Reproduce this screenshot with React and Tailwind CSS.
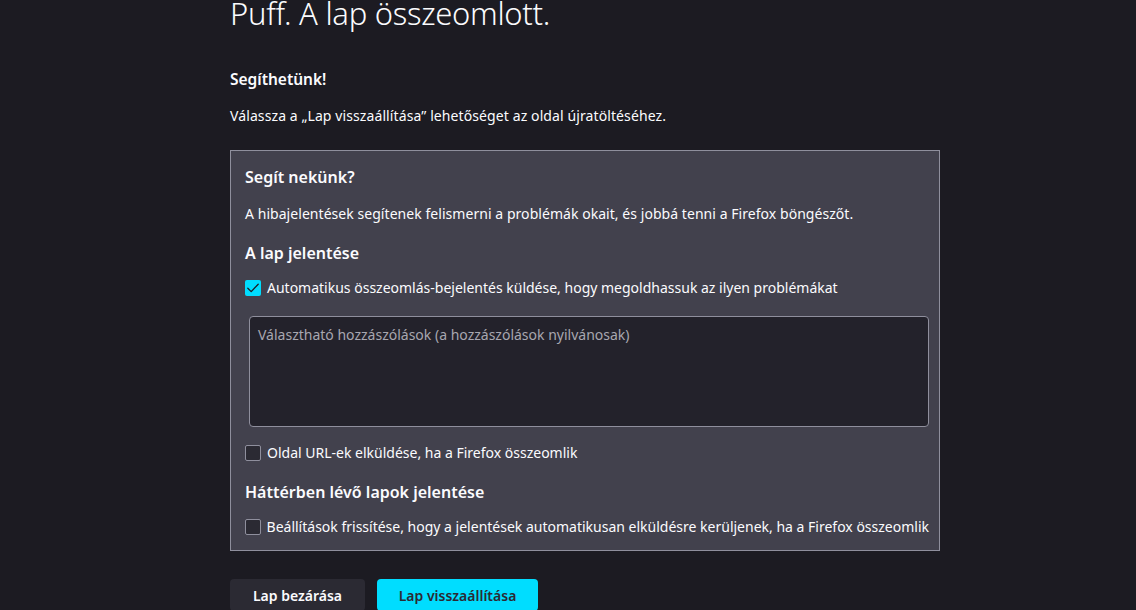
export default function App() {
  return (
    <div className="min-h-[610px] h-[610px] overflow-hidden bg-[#1c1b22] text-[#fbfbfe] font-['Noto_Sans','Open_Sans',sans-serif]">
      <div className="ml-[230px] w-[710px] pt-0">
        <h1 className="text-[31px] font-light leading-[24px] mt-[1px] tracking-[-0.3px]">Puff. A lap összeomlott.</h1>

        <h2 className="mt-[42px] text-[15.5px] font-semibold leading-[24px]">Segíthetünk!</h2>
        <p className="mt-[13px] text-[14px] leading-[24px] tracking-[0.1px]">Válassza a „Lap visszaállítása” lehetőséget az oldal újratöltéséhez.</p>

        {/* hibajelentés doboz */}
        <div className="mt-[22px] h-[401px] border border-[#8f8f9d] bg-[#42414d] pl-[14px] pr-[10px]">
          <h3 className="mt-[14px] text-[16px] font-semibold leading-[24px]">Segít nekünk?</h3>
          <p className="mt-[13px] text-[14px] leading-[24px] tracking-[0.05px]">A hibajelentések segítenek felismerni a problémák okait, és jobbá tenni a Firefox böngészőt.</p>

          <h3 className="mt-[15px] text-[16px] font-semibold leading-[24px]">A lap jelentése</h3>
          <label className="mt-[11px] flex items-center gap-[6px] text-[14px] leading-[24px] whitespace-nowrap">
            <span className="w-[16px] h-[16px] rounded-[2px] bg-[#00ddff] flex items-center justify-center">
              <svg width="14" height="14" viewBox="0 0 14 14" fill="none">
                <path d="M1.8 7.2 5.2 10.6 12.2 3.2" stroke="#1c1b22" strokeWidth="1.3" strokeLinecap="round" strokeLinejoin="round" />
              </svg>
            </span>
            Automatikus összeomlás-bejelentés küldése, hogy megoldhassuk az ilyen problémákat
          </label>

          <div className="mt-[16px] ml-[4px] h-[111px] rounded-[4px] border border-[#8f8f9d] bg-[#23222b] px-[8px] py-[5px]">
            <span className="text-[14px] leading-[24px] text-[#a8a7b0]">Választható hozzászólások (a hozzászólások nyilvánosak)</span>
          </div>

          <label className="mt-[14px] flex items-center gap-[6px] text-[14px] leading-[24px] whitespace-nowrap">
            <span className="w-[16px] h-[16px] rounded-[2px] border border-[#8f8f9d] bg-[#2b2a33]"></span>
            Oldal URL-ek elküldése, ha a Firefox összeomlik
          </label>

          <h3 className="mt-[15px] text-[16px] font-semibold leading-[24px]">Háttérben lévő lapok jelentése</h3>
          <label className="mt-[11px] flex items-center gap-[6px] text-[14px] leading-[24px] whitespace-nowrap">
            <span className="w-[16px] h-[16px] rounded-[2px] border border-[#8f8f9d] bg-[#2b2a33]"></span>
            Beállítások frissítése, hogy a jelentések automatikusan elküldésre kerüljenek, ha a Firefox összeomlik
          </label>
        </div>

        <div className="mt-[28px] flex gap-[12px]">
          <button className="h-[32px] w-[135px] rounded-[4px] bg-[#2b2a33] text-[14px] font-semibold text-[#fbfbfe]">Lap bezárása</button>
          <button className="h-[32px] w-[161px] rounded-[4px] bg-[#00ddff] text-[14px] font-semibold text-[#2b2a33]">Lap visszaállítása</button>
        </div>
      </div>
    </div>
  )
}
